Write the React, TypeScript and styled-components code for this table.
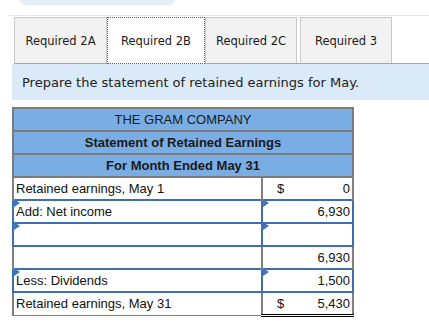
import React from 'react'
import styled, { createGlobalStyle, css } from 'styled-components'

const GlobalStyle = createGlobalStyle`
  body {
    margin: 0;
    background: #ffffff;
    font-family: 'DejaVu Sans', Verdana, sans-serif;
  }
`

const Page = styled.div`
  width: 429px;
  height: 322px;
  overflow: hidden;
`

const TopCard = styled.div`
  width: 156px;
  height: 5px;
  margin-left: 19px;
  background: #e8eef6;
  border-radius: 0 0 8px 8px;
`

const Divider = styled.div`
  height: 1px;
  margin: 10px 0 0 9px;
  background: #e6e6e6;
`

const TabBar = styled.div`
  display: flex;
  margin: 1px 0 0 14px;
  height: 47px;
  border-bottom: 1px solid #a6a6a6;
  box-sizing: border-box;
`

const Tab = styled.div<{ $active?: boolean; $width: number; $gap?: number }>`
  width: ${(p) => p.$width}px;
  margin-right: ${(p) => p.$gap ?? 0}px;
  box-sizing: border-box;
  display: flex;
  align-items: center;
  justify-content: center;
  font-size: 11.5px;
  color: #1a1a1a;
  background: #f2f2f2;
  border: 1px solid #c9c9c9;
  border-bottom: none;
  ${(p) =>
    p.$active &&
    css`
      background: #ffffff;
      border: 1px dotted #2f67b5;
      margin-bottom: -1px;
    `}
`

const Instruction = styled.div`
  margin-left: 12px;
  height: 36px;
  display: flex;
  align-items: center;
  padding-left: 10px;
  background: #daeaf8;
  font-size: 13px;
  color: #222;
`

const Sheet = styled.table`
  margin: 7px 0 0 12px;
  width: 342px;
  border-collapse: collapse;
  font-family: 'Liberation Sans', Arial, sans-serif;
  font-size: 13px;
  color: #111;
`

const Row = styled.tr`
  height: 23px;
`

const HeadCell = styled.td<{ $bold?: boolean }>`
  background: #79ade4;
  border: 2px solid #7b7b7b;
  text-align: center;
  padding: 0;
  font-weight: ${(p) => (p.$bold ? 700 : 400)};
  color: #1a1a1a;
`

const Cell = styled.td<{ $input?: boolean; $amount?: boolean; $rule?: 'single' | 'double' }>`
  position: relative;
  padding: 0 2px;
  border: 2px solid #808080;
  border-top-width: 1px;
  border-bottom-width: 1px;
  text-align: ${(p) => (p.$amount ? 'right' : 'left')};
  width: ${(p) => (p.$amount ? '91px' : 'auto')};
  box-sizing: border-box;
  ${(p) =>
    p.$input &&
    css`
      border: 2px solid #3f6fb2;
      &::before {
        content: '';
        position: absolute;
        left: 0;
        top: 0;
        border-top: 4px solid transparent;
        border-bottom: 4px solid transparent;
        border-left: 6px solid #3f75c0;
        transform: translateY(-2px);
      }
    `}
  ${(p) =>
    p.$rule === 'single' &&
    css`
      border-top: 1px solid #000;
    `}
  ${(p) =>
    p.$rule === 'double' &&
    css`
      border-bottom: 3px double #000;
    `}
`

const Dollar = styled.span`
  float: left;
  margin-left: 12px;
`

const tabs = [
  { label: 'Required 2A', width: 93 },
  { label: 'Required 2B', width: 98, active: true },
  { label: 'Required 2C', width: 92, gap: 3 },
  { label: 'Required 3', width: 92 },
]

export default function App() {
  return (
    <Page>
      <GlobalStyle />
      <TopCard />
      <Divider />
      <TabBar>
        {tabs.map((t) => (
          <Tab key={t.label} $width={t.width} $active={t.active} $gap={t.gap}>
            {t.label}
          </Tab>
        ))}
      </TabBar>
      <Instruction>Prepare the statement of retained earnings for May.</Instruction>
      <Sheet>
        <tbody>
          <Row>
            <HeadCell colSpan={2}>THE GRAM COMPANY</HeadCell>
          </Row>
          <Row>
            <HeadCell colSpan={2} $bold>
              Statement of Retained Earnings
            </HeadCell>
          </Row>
          <Row>
            <HeadCell colSpan={2} $bold>
              For Month Ended May 31
            </HeadCell>
          </Row>
          <Row>
            <Cell>Retained earnings, May 1</Cell>
            <Cell $amount>
              <Dollar>$</Dollar>0
            </Cell>
          </Row>
          <Row>
            <Cell $input>Add: Net income</Cell>
            <Cell $input $amount>
              6,930
            </Cell>
          </Row>
          <Row>
            <Cell $input></Cell>
            <Cell $input $amount></Cell>
          </Row>
          <Row>
            <Cell></Cell>
            <Cell $amount $rule="single">
              6,930
            </Cell>
          </Row>
          <Row>
            <Cell $input>Less: Dividends</Cell>
            <Cell $input $amount>
              1,500
            </Cell>
          </Row>
          <Row>
            <Cell>Retained earnings, May 31</Cell>
            <Cell $amount $rule="double">
              <Dollar>$</Dollar>5,430
            </Cell>
          </Row>
        </tbody>
      </Sheet>
    </Page>
  )
}
